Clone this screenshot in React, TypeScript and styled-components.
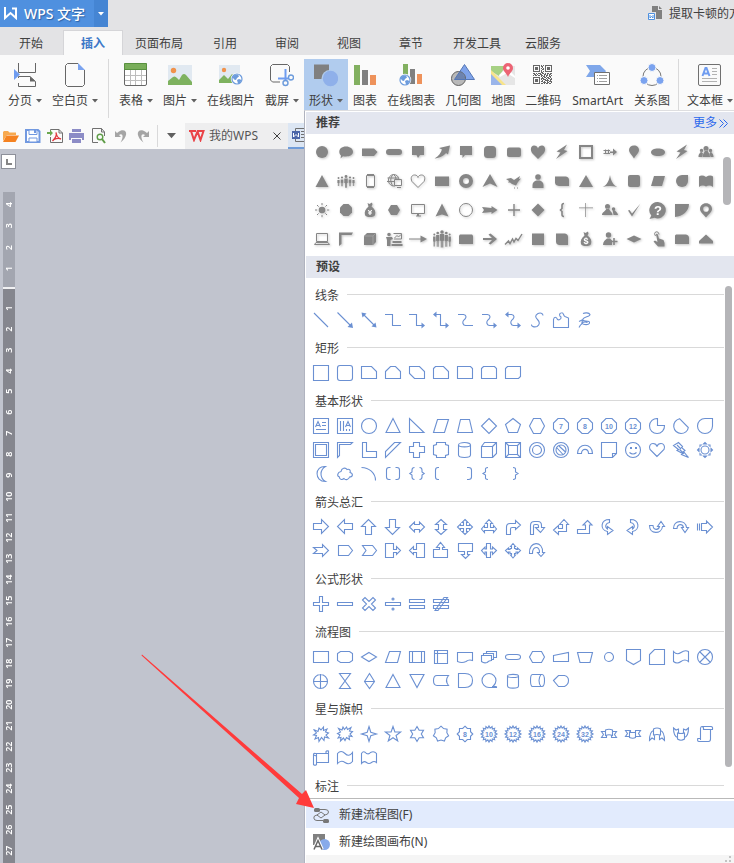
import React from 'react';
import styled, { createGlobalStyle, css } from 'styled-components';

const LINE = '#6b90d2';
const SOLID = '#868686';

const GlobalStyle = createGlobalStyle`
  * { box-sizing: border-box; }
  body {
    margin: 0;
    font-family: "Noto Sans", "Noto Sans CJK SC", sans-serif;
    font-size: 12px;
    line-height: 18px;
    color: #404040;
    background: #c1c4ce;
  }
  button { font: inherit; color: inherit; border: 0; padding: 0; margin: 0; background: none; cursor: default; }
  svg { display: block; flex: none; }
  h2, h3 { margin: 0; font-size: 12px; }
`;

const Page = styled.div`
  position: relative;
  display: flex;
  flex-direction: column;
  min-height: 100vh;
  overflow: hidden;
  white-space: nowrap;
`;

const TitleBar = styled.header`
  display: flex;
  justify-content: space-between;
  height: 27px;
  background: #e3e3e5;
`;

const Brand = styled.div`
  display: flex;
  background: #4f90df;
  color: #fff;
`;

const BrandButton = styled.button`
  display: flex;
  align-items: center;
  gap: 6px;
  width: 94px;
  padding-left: 4px;
  font-size: 14px;
  font-weight: 500;
  text-shadow: 1px 1px 1px #2d61a5;
`;

const BrandMore = styled.button`
  display: flex;
  align-items: center;
  justify-content: center;
  width: 14px;
  background: #4585d3;
`;

const OpenFile = styled.div`
  display: flex;
  align-items: center;
  gap: 6px;
  width: 86px;
  overflow: hidden;
`;

const Tabs = styled.nav`
  display: flex;
  height: 28px;
  padding-top: 3px;
  background: #e3e3e5;
`;

const Tab = styled.button<{ $active?: boolean }>`
  flex: none;
  min-width: 62px;
  padding: 2px 11px 0;
  ${(p) =>
    p.$active &&
    css`
      min-width: 60px;
      margin: 0 1px;
      background: #fafafa;
      border: 1px solid #d5d5d8;
      border-bottom: 0;
      color: #3c78c8;
      font-weight: 700;
    `}
`;

const Ribbon = styled.div`
  display: flex;
  align-items: flex-start;
  height: 68px;
  padding: 4px 0 0 3px;
  background: #fafafa;
  overflow: hidden;
`;

const RibbonButton = styled.button<{ $active?: boolean; $roomy?: boolean }>`
  display: flex;
  flex: none;
  flex-direction: column;
  align-items: center;
  gap: 5px;
  height: 51px;
  padding: 4px ${(p) => (p.$roomy ? 6 : 5)}px 0;
  background: ${(p) => (p.$active ? '#b1ccee' : 'transparent')};
`;

const RibbonLabel = styled.span`
  display: flex;
  align-items: center;
  gap: 4px;
`;

const Divider = styled.span<{ $tight?: boolean }>`
  flex: none;
  width: 1px;
  height: 59px;
  margin: 0 ${(p) => (p.$tight ? 3 : 5)}px;
  background: #d9d9da;
`;

const QuickBar = styled.div`
  display: flex;
  align-items: stretch;
  height: 26px;
  background: #fafafa;
  overflow: hidden;
`;

const QuickTools = styled.div`
  display: flex;
  align-items: center;
  gap: 6px;
  padding: 0 6px 0 3px;
`;

const QuickButton = styled.button`
  display: flex;
  align-items: center;
  justify-content: center;
  width: 16px;
  height: 16px;
`;

const QuickMore = styled.button`
  display: flex;
  align-items: center;
  justify-content: center;
  width: 28px;
  margin: 2px 0;
  border-left: 1px solid #d9d9da;
`;

const DocTab = styled.div<{ $active?: boolean }>`
  display: flex;
  flex: none;
  align-items: center;
  gap: 4px;
  width: 103px;
  padding: 0 7px 0 4px;
  color: #555;
  background: ${(p) => (p.$active ? '#dce6f3' : '#eeeeef')};
  border-bottom: ${(p) => (p.$active ? '2px solid #6f9cd9' : '0')};
`;

const CloseButton = styled.button`
  margin-left: auto;
`;

const Workspace = styled.main`
  display: flex;
  flex: 1;
  flex-direction: column;
  align-items: flex-start;
  background: #c1c4ce;
`;

const TabStop = styled.button`
  display: flex;
  align-items: center;
  justify-content: center;
  width: 15px;
  height: 15px;
  margin: 5px 0 23px 1px;
  background: #fff;
  border: 1px solid #8d909a;
`;

const Ruler = styled.div`
  display: flex;
  flex: 1;
  flex-direction: column;
  width: 12px;
  margin-left: 3px;
  font-family: "Noto Sans", sans-serif;
  font-size: 9px;
  font-weight: 600;
  line-height: 12px;
  color: #fff;
`;

const RulerPart = styled.div<{ $body?: boolean }>`
  display: flex;
  flex-direction: column;
  flex: ${(p) => (p.$body ? '1' : '0 0 97px')};
  padding: ${(p) => (p.$body ? '9px 0 2px' : '2px 0 8px')};
  background: ${(p) => (p.$body ? '#85868e' : '#a3a6b0')};
  border-bottom: ${(p) => (p.$body ? '0' : '2px solid #f1f1f3')};
`;

const Tick = styled.span`
  display: flex;
  flex: 1;
  align-items: center;
  justify-content: center;
  writing-mode: vertical-rl;
  transform: rotate(180deg);
`;

const Menu = styled.section`
  position: absolute;
  top: 110px;
  right: 0;
  bottom: 0;
  left: 304px;
  display: flex;
  flex-direction: column;
  padding: 1px 0 0 1px;
  background: #fff;
  border: 1px solid #b0b3bf;
  border-width: 1px 0 0 1px;
  border-top-color: #dedee0;
`;

const MenuHeader = styled.div`
  display: flex;
  flex: none;
  align-items: center;
  justify-content: space-between;
  height: 22px;
  padding: 0 6px 0 10px;
  background: #e3e6ef;
`;

const MoreLink = styled.a`
  display: flex;
  align-items: center;
  gap: 2px;
  color: #2b68ec;
  text-decoration: none;
`;

const ScrollArea = styled.div<{ $grow?: boolean }>`
  display: flex;
  flex: ${(p) => (p.$grow ? '1' : 'none')};
  min-height: 0;
  overflow: hidden;
`;

const Recommended = styled.div`
  display: grid;
  flex: 1;
  grid-template-columns: repeat(17, 24px);
  grid-auto-rows: 29px;
  padding: 3px 0 3px 4px;
`;

const PresetList = styled.div`
  flex: 1;
  padding-top: 4px;
  overflow: hidden;
`;

const Track = styled.div<{ $outer?: boolean }>`
  display: flex;
  flex: none;
  width: ${(p) => (p.$outer ? 11 : 10)}px;
  padding: ${(p) => (p.$outer ? '23px 3px 51px 0' : '8px 2px 31px 1px')};
`;

const Thumb = styled.div`
  flex: 1;
  border-radius: 4px;
  background: #b5b5b8;
`;

const Category = styled.section`
  margin-bottom: 3px;
`;

const CategoryTitle = styled.h3`
  display: flex;
  align-items: center;
  gap: 8px;
  height: 26px;
  padding: 2px 0 0 9px;
  font-weight: 400;
  &::after {
    content: "";
    flex: 1;
    align-self: flex-start;
    height: 1px;
    margin-top: 10px;
    background: #d9d9d9;
  }
`;

const ShapeGrid = styled.div`
  display: grid;
  grid-template-columns: repeat(17, 24px);
  grid-auto-rows: 24px;
  padding-left: 3px;
`;

const ShapeButton = styled.button<{ $solid?: boolean }>`
  display: flex;
  align-items: center;
  justify-content: center;
  svg {
    overflow: visible;
    filter: ${(p) => (p.$solid ? 'drop-shadow(1px 1px 1px rgba(0,0,0,.22))' : 'none')};
  }
`;

const MenuFooter = styled.div`
  flex: none;
  padding-top: 2px;
  border-top: 1px solid #b9b9b9;
`;

const MenuItem = styled.button<{ $hover?: boolean }>`
  display: flex;
  align-items: center;
  gap: 9px;
  width: 100%;
  height: 27px;
  padding-left: 7px;
  background: ${(p) => (p.$hover ? '#e2ebfd' : '#fff')};
`;

const Grip = styled.div`
  display: flex;
  justify-content: flex-end;
  height: 8px;
  padding-right: 3px;
  background: #f5f5f5;
`;

const Pointer = styled.svg`
  position: absolute;
  top: 654px;
  left: 141px;
  pointer-events: none;
`;

/* ---------- shape data ---------- */

interface Shape {
  name: string;
  d?: string;
  fill?: string;
  text?: string;
  size?: number;
  weight?: number;
  cut?: string;
}

const s = (name: string, d?: string, fill?: string, text?: string, size?: number): Shape => ({
  name, d, fill, text, size,
});

const star = (n: number, outer: number, inner: number, cx = 8, cy = 8) => {
  const pts: string[] = [];
  for (let i = 0; i < n * 2; i += 1) {
    const r = i % 2 ? inner : outer;
    const a = (Math.PI * i) / n - Math.PI / 2;
    pts.push(`${(cx + r * Math.cos(a)).toFixed(2)} ${(cy + r * Math.sin(a)).toFixed(2)}`);
  }
  return `M${pts.join('L')}z`;
};

const circle = (cx: number, cy: number, r: number) =>
  `M${cx - r} ${cy}a${r} ${r} 0 1 0 ${2 * r} 0a${r} ${r} 0 1 0 ${-2 * r} 0z`;

const OCT = 'M5 .5H11L15.5 5V11L11 15.5H5L.5 11V5z';
const GEAR = star(16, 8, 6);
const HEAD_R = 'M16 13.5L12.5 10.5V16.5z';
const HEAD_L = 'M0 2.5L3.5 -.5V5.5z';
const CURVE = 'H6.5C9.5 3 9.5 5.5 8 7C5.5 9 5 11 7 13L8.5 13.5H';

const presets: { title: string; shapes: Shape[] }[] = [
  {
    title: '线条',
    shapes: [
      s('直线', 'M1 1L15 15'),
      s('箭头', 'M.5 .5L14 14', 'M16 16L10.5 15L15 10.5z'),
      s('双箭头', 'M2 2L14 14', 'M15.5 15.5L10.5 14.5L14.5 10.5zM.5 .5L5.5 1.5L1.5 5.5z'),
      s('肘形连接符', 'M0 2.5H7.5V13.5H16'),
      s('肘形箭头连接符', 'M0 2.5H7.5V13.5H13', HEAD_R),
      s('肘形双箭头连接符', 'M3 2.5H7.5V13.5H13', HEAD_R + HEAD_L),
      s('曲线连接符', `M1 2.5${CURVE}16`),
      s('曲线箭头连接符', `M1 2.5${CURVE}13`, HEAD_R),
      s('曲线双箭头连接符', `M3 2.5${CURVE}13`, HEAD_R + HEAD_L),
      s('曲线', 'M14 3.5C14 1 11 .5 9 1.5C5.5 3.5 6.5 5.5 8.5 7.5C11 10 11 12.5 8 14.5C5.5 15.5 2 14.5 2.5 12.5'),
      s('任意多边形', 'M.5 15.5V7.5C1 4.5 3.5 4.5 4.5 7.5C6 8.5 8.5 7 8 5C6 4 6 1 8.5 .8C11 .5 10 3.5 12 4.5L15.5 6V15.5z'),
      s('自由曲线', 'M6 1.5C8 .5 12 .5 13 2.5C13 5 7 4.5 6 7C5 9.500 9 8.500 12 9.500C14 12 10 13.500 6 12C3.500 10.500 8 9 10.500 10.500M6 7.500C4 10 6 12.500 3.500 13L2 15.500M2 9.500L6 7.500'),
    ],
  },
  {
    title: '矩形',
    shapes: [
      s('矩形', 'M.5 .5H15.5V15.5H.5z'),
      s('圆角矩形', 'M3 .5H13Q15.5 .5 15.5 3V13Q15.5 15.5 13 15.5H3Q.5 15.5 .5 13V3Q.5 .5 3 .5z'),
      s('剪去单角的矩形', 'M.5 1.5H10.5L15.5 6.5V13.5H.5z'),
      s('剪去同侧角的矩形', 'M.5 6.5L5.5 1.5H10.5L15.5 6.5V13.5H.5z'),
      s('剪去对角的矩形', 'M.5 1.5H10.5L15.5 6.5V13.5H5.5L.5 8.5z'),
      s('剪去单角圆角的矩形', 'M.5 3.5L2.5 1.5H10.5L15.5 6.5V13.5H.5z'),
      s('单圆角矩形', 'M.5 1.5H13.5L15.5 3.5V13.5H.5z'),
      s('同侧圆角矩形', 'M.5 3.5L2.5 1.5H13.5L15.5 3.5V13.5H.5z'),
      s('对角圆角矩形', 'M.5 3.5L2.5 1.5H15.5V11.5L13.5 13.5H.5z'),
    ],
  },
  {
    title: '基本形状',
    shapes: [
      s('文本框', 'M.5 .5H15.5V15.5H.5zM9 4.5H13M9 7.5H13M3 11.5H13M2.5 9L5 3.5L7.5 9M3.5 7.5H6.5'),
      s('竖排文本框', 'M.5 .5H15.5V15.5H.5zM3.5 3V13M6.5 3V13M8.5 9L11 3.5L13.5 9M9.5 7.5H12.5M9.5 11V13M12.5 11V13'),
      s('椭圆', circle(8, 8, 7.5)),
      s('等腰三角形', 'M8 .5L15 14.5H1z'),
      s('直角三角形', 'M.5 .5V14.5H15z'),
      s('平行四边形', 'M4.5 1.5H15.5L11.5 14.5H.5z'),
      s('梯形', 'M3.5 1.5H12.5L15.5 14.5H.5z'),
      s('菱形', 'M8 .5L15.5 8L8 15.5L.5 8z'),
      s('五边形', 'M8 .5L15.5 6.5L12.5 14.5H3.5L.5 6.5z'),
      s('六边形', 'M4.5 .5H11.5L15.5 8L11.5 15.5H4.5L.5 8z'),
      s('七边形', OCT, undefined, '7'),
      s('八边形', OCT, undefined, '8'),
      s('十边形', OCT, undefined, '10'),
      s('十二边形', OCT, undefined, '12'),
      s('饼形', 'M8.5 .5A7.5 7.5 0 1 0 15.5 7.5H8.5z'),
      s('弦形', 'M6.5 .7L15.3 9.5C15 13 11.5 15.5 8 15.5A7.5 7.5 0 0 1 6.5 .7z'),
      s('泪滴形', 'M15.5 .5V8A7.5 7.5 0 1 1 8 .5z'),
      s('图文框', 'M.5 .5H15.5V15.5H.5zM2.5 2.5H13.5V13.5H2.5z'),
      s('半闭框', 'M.5 .5H15.5L13.5 2.5H2.5V13.5L.5 15.5z'),
      s('L 形', 'M1.5 .5H5.5V9.5H15.5V15.5H1.5z'),
      s('斜纹', 'M9.5 .5H15.5L.5 15.5V9.5z'),
      s('十字形', 'M4.5 .5H10.5V4.5H15.5V10.5H10.5V15.5H4.5V10.5H.5V4.5H4.5z'),
      s('缺角矩形', 'M3.5 .5H12.5V2.5L15.5 3.5V12.5L12.5 13.5V15.5H3.5V13.5L.5 12.5V3.5L3.5 2.5z'),
      s('圆柱形', 'M1.5 3V13C1.5 16.3 13.5 16.3 13.5 13V3C13.5 -.3 1.5 -.3 1.5 3C1.5 5.5 13.5 5.5 13.5 3'),
      s('立方体', 'M.5 4.5H11.5V15.5H.5zM.5 4.5L3.5 .5H15.5V11.5L11.5 15.5M11.5 4.5L15.5 .5'),
      s('棱台', 'M.5 .5H15.5V15.5H.5zM3.5 3.5H12.5V12.5H3.5zM.5 .5L3.5 3.5M15.5 .5L12.5 3.5M.5 15.5L3.5 12.5M15.5 15.5L12.5 12.5'),
      s('同心圆', circle(8, 8, 7.5) + circle(8, 8, 4.5)),
      s('禁止符', circle(8, 8, 7.5) + circle(8, 8, 5) + 'M4 6L10 12.5M6 4L12.5 10'),
      s('空心弧', 'M.5 11.5C.5 .5 15.5 .5 15.5 11.5H11.5C11.5 6 4.5 6 4.5 11.5z'),
      s('折角形', 'M.5 .5H15.5V11.5L11.5 15.5H.5zM15.5 11.5H11.5V15.5'),
      s('笑脸', circle(8, 8, 7.5) + 'M4.5 10.5Q8 13.5 11.5 10.5', 'M5 5h2v2h-2zM10 5h2v2h-2z'),
      s('心形', 'M8 14.5L1 7.5C-.5 4 1.5 1.5 4 1.5C6 1.5 7.5 2.5 8 4.5C8.5 2.5 10 1.5 12 1.5C14.5 1.5 16.5 4 15 7.5z'),
      s('闪电形', 'M5.5 .5L.5 3.5L5.5 7.5L4 8.5L9.5 11.5L8.5 12.5L15.5 15.5L10.5 9.5L12 8.5L8.5 5.5L9.5 4.5zM4 3L8 7M6.5 7.5L11 11.5'),
      s('太阳形', circle(8, 8, 4) + 'M6.5 2L8 .5L9.5 2zM6.5 14L8 15.5L9.5 14zM2 6.5L.5 8L2 9.5zM14 6.5L15.5 8L14 9.5zM3 5V3H5M11 3H13V5M13 11V13H11M5 13H3V11'),
      s('新月形', 'M12.5 .5C1.5 -.5 1 15.5 12.5 15.5C6.5 12 6.5 4 12.5 .5z'),
      s('云形', 'M4 5.5C4.5 2 8.5 1 10 3.5C12.5 2.5 14 4.5 13 6.5C16.5 7.5 16 11 12.5 11C12 13.5 8.5 14.5 7 12.5C5 14.5 2 13 2.5 11C-.5 10 .5 6 4 5.5z'),
      s('弧形', 'M.5 1.5C8 1.5 14.5 7 14.5 14.5'),
      s('双括号', 'M5.5 1.5H4Q1.5 1.5 1.5 4V11Q1.5 13.5 4 13.5H5.5M10.5 1.5H12Q14.5 1.5 14.5 4V11Q14.5 13.5 12 13.5H10.5'),
      s('双大括号', 'M5.5 1.5Q3 1.5 3 4V6L.8 7.5L3 9V11Q3 13.5 5.5 13.5M10.5 1.5Q13 1.5 13 4V6L15.2 7.5L13 9V11Q13 13.5 10.5 13.5'),
      s('左中括号', 'M6 1.5H5Q2.5 1.5 2.5 4V11Q2.5 13.5 5 13.5H6'),
      s('右中括号', 'M10 1.5H11.5Q14.5 1.5 14.5 4V11Q14.5 13.5 11.5 13.5H10'),
      s('左大括号', 'M7 1.5Q4 1.5 4.5 4V6L2 7.5L4.5 9V11Q4 13.5 7 13.5'),
      s('右大括号', 'M8 1.5Q11 1.5 10.500 4V6L13 7.500L10.500 9V11Q11 13.500 8 13.500'),
    ],
  },
  {
    title: '箭头总汇',
    shapes: [
      s('右箭头', 'M.5 4.5H8.5V.5L15.5 7.5L8.5 14.5V10.5H.5z'),
      s('左箭头', 'M15.5 4.5H7.5V.5L.5 7.5L7.5 14.5V10.5H15.5z'),
      s('上箭头', 'M4.5 15.5V7.5H.5L7.5 .5L14.5 7.5H10.5V15.5z'),
      s('下箭头', 'M4.5 .5H10.5V8.5H14.5L7.5 15.5L.5 8.5H4.5z'),
      s('左右箭头', 'M.5 8L5.5 3V5.5H10.5V3L15.5 8L10.5 13V10.5H5.5V13z'),
      s('上下箭头', 'M8 .5L13.5 5.5H10.5V10.5H13.5L8 15.5L2.5 10.5H5.5V5.5H2.5z'),
      s('十字箭头', 'M8 .5L11 3.5H9.5V6.5H12.5V5L15.5 8L12.5 11V9.5H9.5V12.5H11L8 15.5L5 12.5H6.5V9.5H3.5V11L.5 8L3.5 5V6.5H6.5V3.5H5z'),
      s('丁字箭头', 'M8 .5L11.5 4.5H9.5V8.5H12.5V6.5L15.5 10L12.5 13.5V11.5H3.5V13.5L.5 10L3.5 6.5V8.5H6.5V4.5H4.5z'),
      s('圆角右箭头', 'M1.5 15.5V8Q1.5 4.5 5 4.5H10.5V1.5L15.5 6L10.5 10.5V8.5H7Q5.5 8.5 5.5 10V15.5z'),
      s('手杖形箭头', 'M1.5 15.5V6.5Q1.5 2.5 5.5 2.5H9Q12.5 2.5 12.5 6.5V8.5H15.5L11.5 13.5L6.5 8.5H9.5V7Q9.5 5.5 8 5.5H6Q4.5 5.5 4.5 7V15.5z'),
      s('直角双向箭头', 'M11 .5L15.5 5.5H13.5V12.5H5.5V15.5L.5 11L5.5 6.5V9.5H9.5V5.5H6.5z'),
      s('直角上箭头', 'M10.5 1.5L15 6H12.5V14.5H.5V10.5H8.5V6H6z'),
      s('左弧形箭头', 'M8.5 .5C-.5 .5 -1.5 11 6.5 12.5V15.5L12 11.500L6.500 7.500V10C3.500 8 4.500 4 8.500 3.500z'),
      s('右弧形箭头', 'M5.500 .5C14.500 .5 15.500 11 7.500 12.500V15.500L2 11.500L7.500 7.500V10C10.500 8 9.500 4 5.500 3.500z'),
      s('下弧形箭头', 'M.5 6.5C.5 15.5 12.5 15.5 13.5 7.5H15.5L12 2.5L8.5 7.5H10.5C9.5 11.5 4.5 11.5 4 6.5z'),
      s('上弧形箭头', 'M.5 9.5C.5 .5 12.5 .5 13.5 8.5H15.5L12 13.5L8.5 8.5H10.5C9.5 4.5 4.5 4.5 4 9.5z'),
      s('虚尾箭头', 'M.5 4.5V11.5M2.5 4.5V11.5M4.5 4.5H9.5V2L15.5 8L9.5 14V11.5H4.5z'),
      s('燕尾形箭头', 'M.5 4.5H9.5V1.5L15.5 7.5L9.5 13.5V10.5H.5L4 7.5z'),
      s('五边形箭头', 'M1.5 2.5H11.5L15.5 7.5L11.5 12.5H1.5z'),
      s('燕尾形', 'M1.5 2.5H11.5L15.5 7.5L11.5 12.5H1.5L5 7.5z'),
      s('右箭头标注', 'M.5 .5H8.5V6.5H11.5V3.5L15.5 7.5L11.5 11.5V9.5H8.5V14.5H.5z'),
      s('左箭头标注', 'M15.5 .5H7.5V6.5H4.5V3.5L.5 7.5L4.5 11.5V9.5H7.5V14.5H15.5z'),
      s('上箭头标注', 'M.5 14.5V6.5H6.5V4.5H3.5L7.5 -.5L11.5 4.5H9.5V6.5H14.5V14.5z'),
      s('下箭头标注', 'M1.5 .5V8.5H7.5V11.5H4.5L8.5 15.5L12.5 11.5H10.5V8.5H15.5V.5z'),
      s('左右箭头标注', 'M5.5 .5H9.5V6H11.5V4L15.5 7.5L11.5 11.5V9H9.5V14.5H5.5V9H4V11.5L.5 7.5L4 4V6H5.5z'),
      s('十字箭头标注', 'M8 .5L10.5 3.5H9.5V5.5H11V6.5H12.5V5L15.5 7.5L12.5 10.5V9H11V10.5H9.5V12H10.5L8 15L5.5 12H6.5V10.5H5V9H3.5V10.5L.5 7.5L3.5 5V6.5H5V5.5H6.5V3.5H5.5z'),
      s('环形箭头', 'M.5 10.5C-.5 -2.5 14.5 -2.5 13.5 9.5H15.5L12 13.5L8.5 9.5H10.5C11 3 3.5 2.5 3.5 10.5z'),
    ],
  },
  {
    title: '公式形状',
    shapes: [
      s('加号', 'M6.5 .5H9.5V6.5H15.5V9.5H9.5V15.5H6.5V9.5H.5V6.5H6.5z'),
      s('减号', 'M.5 6.5H15.5V9.5H.5z'),
      s('乘号', 'M1.5 4L4 1.5L8 5.5L12 1.5L14.5 4L10.5 8L14.5 12L12 14.5L8 10.5L4 14.5L1.5 12L5.5 8z'),
      s('除号', 'M.5 6.5H15.5V9.5H.5z' + circle(8, 3, 1) + circle(8, 13, 1)),
      s('等号', 'M.5 3.5H15.5V6.5H.5zM.5 9.5H15.5V12.5H.5z'),
      s('不等号', 'M.5 3.5H15.5V6.5H.5zM.5 9.5H15.5V12.5H.5zM2 14.5L11 1.5H14.5L5 14.5z'),
    ],
  },
  {
    title: '流程图',
    shapes: [
      s('过程', 'M.5 2.5H15.5V13.5H.5z'),
      s('可选过程', 'M3.5 2.5H12.5L15.5 4.5V11.5L12.5 13.5H3.5L.5 11.5V4.5z'),
      s('决策', 'M8 3.5L15.5 8L8 12.5L.5 8z'),
      s('数据', 'M4.5 2.5H15.5L12.5 13.5H.5z'),
      s('预定义过程', 'M.5 2.5H15.5V13.5H.5zM3.5 2.5V13.5M12.5 2.5V13.5'),
      s('内部贮存', 'M1.5 1.5H14.5V14.5H1.5zM1.5 4.5H14.5M4.5 1.5V14.5'),
      s('文档', 'M.5 3.5H15.5V11.5Q12 10 9 12.5Q5 14.5 .5 12.5z'),
      s('多文档', 'M.5 6.5H10.5V11.5Q8 11.5 6 13.5Q3 14.5 .5 12.5zM2.5 6V4.5H12.5V10.5H11M5.5 4V2.5H15.5V8.5H13'),
      s('终止', 'M4 5.5H12Q15.5 5.5 15.5 8T12 10.5H4Q.5 10.5 .5 8T4 5.5z'),
      s('准备', 'M3.5 2.5H12.5L15.5 8L12.5 13.5H3.5L.5 8z'),
      s('手动输入', 'M.5 6.5L15.5 3.5V12.5H.5z'),
      s('手动操作', 'M.5 3.5H15.5L13 13.5H3z'),
      s('联系', circle(8, 8, 4.5)),
      s('离页连接符', 'M1.5 .5H15.5V11.5L8.5 15.5L1.5 11.5z'),
      s('卡片', 'M5.5 .5H15.5V15.5H.5V5.5z'),
      s('资料带', 'M.5 2.5Q4 6.5 8 3.5T15.5 2.5V12.5Q12 9.5 8 12.5T.5 12.5z'),
      s('汇总连接', circle(8, 8, 7.5) + 'M3 3L13 13M13 3L3 13'),
      s('或者', circle(7.5, 8.5, 7) + 'M.5 8.5H14.5M7.5 1V15'),
      s('对照', 'M2.5 .5H13.5L8 8L13.5 15.5H2.5L8 8z'),
      s('排序', 'M8.5 .5L13.5 8.5L8.5 15.5L3.5 8.5zM3.5 8.5H13.5'),
      s('摘录', 'M8 1.5L15 14.5H1z'),
      s('合并', 'M1 1.5H15L8 14.5z'),
      s('存储数据', 'M4 2.5H15.5Q11.5 7.5 15.5 12.5H4Q.5 12.5 .5 7.5T4 2.5z'),
      s('延期', 'M1.5 .5H8Q15.5 .5 15.5 7.5T8 14.5H1.5z'),
      s('顺序访问存储器', 'M15.5 13.5H11M12 13.5C14 11.5 15 10 15 7.5A7 7 0 1 0 8 14.5H15.5V13.5'),
      s('磁盘', 'M2.5 3V13C2.5 15.8 13.5 15.8 13.5 13V3C13.5 .8 2.5 .8 2.5 3C2.5 5 13.5 5 13.5 3'),
      s('直接访问存储器', 'M3.500 1.500H13Q15.500 1.500 15.500 7.500T13 13.500H3.500Q1.500 13.500 1.500 7.500T3.500 1.500zM12 1.500Q10 4 10 7.500T12 13.500'),
      s('显示', 'M.5 7.5L5.5 2.5H11.5Q15.5 3.5 15.5 7.5T11.5 13.5H5.5z'),
    ],
  },
  {
    title: '星与旗帜',
    shapes: [
      s('爆炸形 1', 'M8 4L10.5 1V4.5L14 3L12.5 6L15.5 7L13 9L15.5 12L11.5 11L11 14.5L8.5 11.5L6 15.5L5.5 11.5L2 13L3.5 9.5L.5 9L3.5 7L.5 3.5L5 5.5L6 2z'),
      s('爆炸形 2', 'M7.5 3.5L9.5 1L10.5 3.5L14 1.5L12.5 5L15.5 5.5L13 8L15 10.5L12 10L12.5 13.5L9.5 11.5L8 14.5L6.5 12L3.5 15L4 11.5L1 12L3 9L.5 7.5L3.5 6L1.5 2.5L5 4L6 1z'),
      s('十字星', star(4, 7.5, 2.5)),
      s('五角星', star(5, 8, 3.2, 8, 8.5)),
      s('六角星', star(6, 7.5, 4.3)),
      s('七角星', star(7, 7.8, 6)),
      s('八角星', star(8, 7.8, 6), undefined, '8'),
      s('十角星', GEAR, undefined, '10'),
      s('十二角星', GEAR, undefined, '12'),
      s('十六角星', GEAR, undefined, '16'),
      s('二十四角星', GEAR, undefined, '24'),
      s('三十二角星', GEAR, undefined, '32'),
      s('上凸带形', 'M4.5 4Q8 2.5 11.5 4V9.5Q8 8 4.5 9.5zM4.5 5.5H.5L2.5 8.5L.5 11.5H5.5V9.5M11.5 5.5H15.5L13.5 8.5L15.5 11.5H10.5V9.5'),
      s('前凸带形', 'M5.5 6.5H10.5V11.5Q8 13 4.5 11.5V6zM4.5 10.5H.5L2.5 7.5L.5 4.5H5.5V6.5M11 10.5H15.5L13.5 7.5L15.5 4.5H10.5V6.5'),
      s('上凸弯带形', 'M4.5 3Q8 1 11.5 3V9Q8 8 4.5 9zM4.5 4.5Q.5 6 .5 14.5L3 12L5.5 13.5V9M11.5 4.5Q15.5 6 15.5 14.5L13 12L10.5 13.5V9'),
      s('前凸弯带形', 'M4.5 7Q8 8 11.5 7V13Q8 15.5 4.5 13zM4.5 11.5Q.5 10 .5 2L3 4L5.5 3V7M11.5 11.5Q15.5 10 15.5 2L13 4L10.5 3V7'),
      s('竖卷形', 'M4.5 .5H14Q16 .5 15.5 3.5H13.5V13Q13.5 15.5 11.5 15.5H2Q0 15.5 .8 12.5H3.5V2.5Q3.5 .5 5 .5Q7 1 6.5 3.5H13.5M3.5 12.5V14'),
      s('横卷形', 'M.5 4.5Q.5 3 2.5 3.5H13V1.5Q13.5 .5 15.5 1V12.5H3.5V14.5Q2 16 .5 14.5zM3.5 4V12.5M.5 5L3.5 6M13 3.5H15.5'),
      s('波形', 'M.5 3.5Q4 -.5 8 3.5T15.5 2.5V11.5Q12 15.5 8 12.5T.5 13.5z'),
      s('双波形', 'M.5 3.5Q2.5 0 5.5 3.5Q8 4.5 9.5 2.5Q13 .5 15.5 3.5V12.5Q13 10.5 10.5 12.5Q8 14.5 5.5 12.5Q3 10.5 .5 13.5z'),
    ],
  },
  { title: '标注', shapes: [] },
];

const person = (x: number, y: number, h: number, w = 3) =>
  `${circle(x, y, w * 0.42)}M${x - w / 2} ${y + 2}h${w}v${h * 0.42}h-${w * 0.2}v${h * 0.42}h-${w * 0.25}v-${h * 0.4}h-${w * 0.1}v${h * 0.4}h-${w * 0.25}v-${h * 0.42}h-${w * 0.2}z`;

const BOLT = 'M13 .5L2.500 7.500L6.500 8.500L2 15L13.500 7L10 6z';
const BAG = 'M5.5 1L7.5 2L10 .5L10.5 2.5L9.5 4.5C13 7 14 10 13 13Q12 15 8 15T3 13C2 10 3.5 7 6.5 4.5z';
const PEOPLE = circle(8, 4.5, 2.5) + 'M4.5 13C4.5 10 6 9.5 7 6.5H9.5C11 10 12 10 12 13z' + circle(3.5, 6.5, 1.7) + 'M.5 13C.5 9.5 2 9.5 3 7.5L5 9.5L4 13z' + circle(12.5, 6.5, 1.7) + 'M12.5 13H15.5C15.5 9.5 14 9.5 13 7.5L11.5 9.5z';

const recommended: Shape[] = [
  s('圆形', undefined, circle(8, 8, 6)),
  s('椭圆标注', undefined, 'M8 2.5C12 2.5 15 4.8 15 7.8S12 12.500 8 12.500C6.8 12.500 6 12.500 5 12.3L2.500 14.500L3 11.500C-.5 8 1.500 2.500 8 2.500z'),
  s('五边形', undefined, 'M0 4.5H12L15.5 8L12 12H0z'),
  s('胶囊形', undefined, 'M3 5H13A3 3 0 0 1 13 11H3A3 3 0 0 1 3 5z'),
  s('矩形标注', undefined, 'M2 2H14V11H10L8 14L6.5 11H2z'),
  s('飞箭', undefined, 'M.5 14.5C6 14 10 11.5 12 9L14 10.5L16 1.500L5 4L8 5.500C7 8.500 5 12 .5 14.500z'),
  s('左下标注', undefined, 'M2 2H14V11H7L4.5 14V11H2z'),
  s('圆角方形', undefined, 'M5.5 2H10.500Q14 2 14 5.500V10.500Q14 14 10.500 14H5.500Q2 14 2 10.500V5.500Q2 2 5.500 2z'),
  s('圆角矩形', undefined, 'M3 3.5H13Q15 3.5 15 5.5V11Q15 13 13 13H3Q1 13 1 11V5.5Q1 3.5 3 3.5z'),
  s('心形', undefined, 'M8 15L2 9C-.5 5 1.5 1.5 4 1.5C6 1.5 7.5 2.5 8 4.5C8.5 2.5 10 1.5 12 1.5C14.5 1.5 16.5 5 14 9z'),
  s('闪电', undefined, BOLT),
  { name: '图文框', d: 'M2 2H14V14H2z', weight: 2 },
  s('虚线箭头', 'M1.5 6.5H8M1.5 9.5H8M3.5 5.5V10M6.5 5.5V10', 'M8 7.5H11V4.5L15 8L11 11.5V9H8z'),
  s('水滴针', undefined, 'M8 1.5C11 1.5 13 3.5 13 6C13 9 10 11 8 14.5C6 11 3 9 3 6C3 3.5 5 1.5 8 1.5z'),
  s('扁椭圆', undefined, 'M8 4.5C12 4.5 15 6 15 8.2S12 12 8 12S1 10.5 1 8.2S4 4.5 8 4.5z'),
  s('闪电', undefined, BOLT),
  s('人群', undefined, PEOPLE),

  s('三角形', undefined, 'M8 2L14.5 14H1.5z'),
  s('团队', undefined, person(8, 3.500, 11, 3.4) + person(4, 4.500, 8, 2.6) + person(12, 4.500, 8, 2.6) + person(.5, 5, 7, 2.2) + person(15.500, 5, 7, 2.2)),
  s('手机', 'M5.5 1.5H11.5L12.5 3V13.5L11.5 14.5H5.5L4.5 13.5V3z', 'M5 1H12V3H5zM5 13H12V15H5z'),
  s('网络', 'M7.5 1.5A5.8 5.8 0 1 0 9 13M7.5 1.5A5.8 5.8 0 0 1 13 6.5M7 1.5C4 5 4 9 7 13M7.5 1.5Q10 3 10 6M1.5 5H12.5M1 8.5H8M8.5 6.5H15.5V12.5H8.5zM11 14.5H15'),
  { name: '空心心形', d: 'M8 14.500L2 8.500C0 4.500 2 2 4.500 2C6.500 2 7.500 3 8 4.500C8.500 3 9.500 2 11.500 2C14 2 16 4.500 14 8.500z' },
  s('矩形', undefined, 'M1 3.5H15V13H1z'),
  s('圆环', undefined, circle(8, 8, 7) + 'M5 8a3 3 0 1 1 6 0a3 3 0 1 1 -6 0z'),
  s('导航箭头', undefined, 'M8 1L15.5 14L8 10.5L.5 14z'),
  s('飞鸟', undefined, 'M0 6L5 5L8 7L11 5L14 3L13 6L15 5.5L12 9L10 12.5L6 11L4 9.5L2 9.5L3 8zM8 14.500h1v1h-1zM11 14.500h1v1h-1z'),
  s('人物', undefined, circle(8, 4, 2.8) + 'M2.5 15V12C2.5 9.5 4.5 8 6.5 7.5H9.5C11.5 8 13.5 9.5 13.5 12V15z'),
  s('对角矩形', undefined, 'M1 3.5H12Q15 4 15 7V13H5Q1 12.5 1 9.5z'),
  s('三角形', undefined, 'M8 2L15 14H1z'),
  s('弧边三角形', undefined, 'M8 2C9 8 11 12 15.5 14Q8 12 .5 14C5 12 7 8 8 2z'),
  s('圆角方形', undefined, 'M4 2H12Q14 2 14 4V12Q14 14 12 14H4Q2 14 2 12V4Q2 2 4 2z'),
  s('平行四边形', undefined, 'M4 3H15L12 13H1z'),
  s('泪滴形', undefined, 'M14 2V8A6 6 0 1 1 8 2z'),
  s('书本', undefined, 'M1 3.5Q4 1.5 8 4Q12 1.5 15 3.5V14Q11.5 11.5 8 13.5Q4.5 11.5 1 14z'),

  s('太阳', 'M8 1V3.2M8 13V15.2M1 8H3.2M13 8H15.2M3 3L4.6 4.6M13 3L11.4 4.6M3 13L4.6 11.4M13 13L11.4 11.4', circle(8, 8, 3.3)),
  s('八边形', undefined, 'M5.5 2H10.5L14 5.5V10.5L10.5 14H5.5L2 10.5V5.5z'),
  s('钱袋', undefined, BAG, '¥', 8),
  s('六边形', undefined, 'M5 3H11L14 8L11 13H5L2 8z'),
  s('显示器', 'M1.5 2.5H14.5V11.5H1.5zM6 14H11', 'M7 12H9V14H7z'),
  s('箭形三角', undefined, 'M8 1.5L14.5 14.5L8 12.5L1.5 14.5z'),
  s('空心圆', circle(8, 8, 6.5)),
  s('粗箭头', undefined, 'M0 5L9.5 6V4L15.5 8L9.5 12V10L0 11L2 8z'),
  { name: '加号', d: 'M8 2V14M2 8H14', weight: 1.4 },
  s('菱形', undefined, 'M8 1.5L14.5 8L8 14.5L1.5 8z'),
  { name: '左大括号', d: 'M10 1.500Q8 1.500 8 3.500V6.500L6.500 8L8 9.500V12.500Q8 14.500 10 14.500', weight: 1.6 },
  s('细十字', undefined, 'M1 5.5H15V6.2H1zM7 1H7.7V15H7z'),
  s('双人', undefined, circle(5.5, 4.5, 2.5) + 'M0 13C0 10 3 10 4.5 6.5H7C8 10 10.5 10 10.5 13z' + circle(11.5, 7, 1.8) + 'M11.5 13H16C16 11 14 10 12.5 8H10.500z'),
  s('对勾', undefined, 'M2 8.5L3.5 8L6 11.5L14.5 1.500L6 14.500z'),
  s('疑问', undefined, 'M8 0A8.2 8.2 0 1 1 4.5 15.8L-.5 17L1.3 13.5A8.2 8.2 0 0 1 8 0z', '?', 13),
  s('四分之一圆', undefined, 'M1 2H15C15 9 8.5 14.5 1 15z'),
  s('定位', undefined, 'M8 1.2C11.5 1.2 14 3.7 14 7C14 10 11 12 8 15.5C5 12 2 10 2 7C2 3.7 4.5 1.2 8 1.2zM5.2 7a2.8 2.8 0 1 0 5.6 0a2.8 2.8 0 1 0 -5.6 0z'),

  s('笔记本电脑', 'M2.5 2.5H13.5V10.5H2.5zM.5 13.5H15.5L14 11.5H2z'),
  s('半闭框', undefined, 'M1 1.5H15L13.5 4H3.5V13L1 15z'),
  { name: '立方体', fill: 'M2 5L5 2H14V11L11 14H2z', cut: 'M2 5H11V14M11 5L14 2' },
  s('演示', 'M7.5 2.5H15.5V8H8M8.5 7L11 4.5L12.5 6L15 3.5', circle(3, 3.5, 1.8) + 'M0 6H6L7 8L4.5 9V15H1V9zM6.5 10h9v2h-9zM5.5 13h11v2h-11z'),
  s('细箭头', 'M-1 8H13', 'M17 8L10.5 4.5V11.5z'),
  s('人群', undefined, person(8, 1, 16, 4.2) + person(3.7, 2, 14, 3.2) + person(12.3, 2, 14, 3.2) + person(.3, 3.500, 12, 2.4) + person(15.7, 3.500, 12, 2.4)),
  s('矩形', undefined, 'M2 3.5H14L15 4.5V13H1V4.5z'),
  s('右箭头', undefined, 'M1 7H10L6.5 3.5L8.5 2.5L15 8L8.5 13.5L6.5 12.5L10 9H1z'),
  { name: '折线', d: 'M-1 13.500L2.500 10L4 12.500L6.500 8L8 11L10 7.500L12 9.500L16 3', weight: 1.4 },
  s('正方形', undefined, 'M2 2.5H14V14H2z'),
  s('折角方形', undefined, 'M2 2.5H11Q14 3 14 6V14H5Q2 13.5 2 10.5z'),
  s('美元钱袋', undefined, BAG, '$', 9),
  { name: '添加用户', d: 'M12 7V14M8.500 10.500H15.500', fill: circle(6.5, 4, 2.7) + 'M1 14C1 10.500 3 9 5 7.500H8L10 9.500V14z', weight: 1.600 },
  s('扁菱形', undefined, 'M8 4.5L15.5 8L8 11.5L.5 8z'),
  s('手势', 'M5.5 5Q3.5 2.5 5.5 1Q8.5 0 9 3.5', 'M6 3Q7.5 2 8 4L9 7.5L13.5 9L14.5 12V15.5H8L3.5 10.5L5 9.5L7.5 11z'),
  s('单圆角矩形', undefined, 'M2 3.5H12Q15 4 15 7V13H1V4.500z'),
  s('扁三角', undefined, 'M8 3.5L15 10V12.5H1V10z'),
];

const RINGS = ['圆环', '定位'];

function ShapeIcon({ shape, solid }: { shape: Shape; solid?: boolean }) {
  const color = solid ? SOLID : LINE;
  return (
    <svg width="16" height="16" viewBox="0 0 16 16" aria-hidden="true">
      {shape.fill && (
        <path d={shape.fill} fill={color} fillRule={RINGS.includes(shape.name) ? 'evenodd' : 'nonzero'} />
      )}
      {shape.d && <path d={shape.d} fill="none" stroke={color} strokeWidth={shape.weight || (solid ? 1 : 1.1)} />}
      {shape.cut && <path d={shape.cut} fill="none" stroke="#a6a6a6" strokeWidth=".8" />}
      {shape.text && (
        <text
          x="8"
          y={solid ? 12.5 : 10.5}
          textAnchor="middle"
          fontFamily="Liberation Sans, sans-serif"
          fontWeight="700"
          fontSize={shape.size || 7}
          fill={solid ? '#fff' : LINE}
        >
          {shape.text}
        </text>
      )}
    </svg>
  );
}

/* ---------- toolbar drawings ---------- */

const Caret = ({ size = 6, color = '#606060' }: { size?: number; color?: string }) => (
  <svg width={size} height={Math.ceil(size / 2) + 1} viewBox="0 0 6 4" aria-hidden="true">
    <path d="M0 0H6L3 3.5z" fill={color} />
  </svg>
);

const Big = ({ children }: { children: React.ReactNode }) => (
  <svg width="24" height="24" viewBox="0 0 24 24" fill="none" aria-hidden="true">{children}</svg>
);

const Small = ({ children }: { children: React.ReactNode }) => (
  <svg width="16" height="16" viewBox="0 0 16 16" fill="none" aria-hidden="true">{children}</svg>
);

const Globe = ({ x, y }: { x: number; y: number }) => (
  <g transform={`translate(${x} ${y})`}>
    <circle r="6.2" fill="#fafafa" />
    <circle r="5" fill="#fff" stroke="#6c9bdc" strokeWidth="1.2" />
    <path d="M-4.5 -2L-2 -4.5H1L2 -2.500L0 -1L-1 1L-3 .5zM0 1L2 0L4.500 1L3 4L1 4.500z" fill="#6c9bdc" />
  </g>
);

const QR = ['1111111010101111111', '1000001011001000001', '1011101001001011101', '1011101010101011101', '1011101001101011101', '1000001010001000001', '1111111010101111111', '0000000011000000000', '1101011101101011011', '0110100110011010110', '1011011011010110101', '0000000010110100110', '1111111001011011010', '1000001011100101101', '1011101010111010011', '1011101001001111010', '1011101011010010111', '1000001000111011001', '1111111011010110110'];
const qrPath = QR.map((row, y) => [...row].map((c, x) => (c === '1' ? `M${x + 2} ${y + 2}h1v1h-1z` : '')).join('')).join('');

interface Tool {
  label: string;
  icon: React.ReactNode;
  caret?: boolean;
  active?: boolean;
  roomy?: boolean;
}

const pageTools: Tool[] = [
  {
    label: '分页',
    caret: true,
    icon: (
      <Big>
        <path d="M5.5 0V9.5H22.5V0M5.5 15V13.5H17L22.5 18.5V23.5H5.5V20" stroke="#666" />
        <path d="M17 13.5V18.5H22.5z" fill="#666" />
        <path d="M1 6L7 11.5L1 17z" fill="#6f9cf0" />
      </Big>
    ),
  },
  {
    label: '空白页',
    caret: true,
    icon: (
      <Big>
        <path d="M15 .5H4.5L2.5 2.5V21.5L4.5 23.5H19.5L21.5 21.5V7" stroke="#666" />
        <path d="M15 0L22 7H15z" fill="#7ba3ef" />
      </Big>
    ),
  },
];

const insertTools: Tool[] = [
  {
    label: '表格',
    caret: true,
    icon: (
      <Big>
        <path d="M.5 1.5H22.5V23H.5z" fill="#fff" />
        <path d="M6.5 7V23M11.5 7V23M17.5 7V23M1 12.5H22M1 17.5H22" stroke="#bdbdbd" />
        <rect x=".5" y=".5" width="22" height="22" rx="1.5" stroke="#666" />
        <path d="M.5 .5H22.5V6.5H.5z" fill="#79ae5a" stroke="#58913f" />
      </Big>
    ),
  },
  {
    label: '图片',
    caret: true,
    icon: (
      <Big>
        <path d="M0 2H24V22H0z" fill="#e1e9f1" />
        <circle cx="5.5" cy="7.5" r="2.7" fill="#f0924c" />
        <path d="M0 22V18L5 14Q7 12.5 9 15L11 17L14 12Q16 10 18 12L24 19V22z" fill="#7eb25f" />
      </Big>
    ),
  },
  {
    label: '在线图片',
    icon: (
      <Big>
        <path d="M0 2H21V20H0z" fill="#e1e9f1" />
        <circle cx="5" cy="7" r="2.2" fill="#f0924c" />
        <path d="M0 20V17L5 12L9 16L13 11L16 12V20z" fill="#7eb25f" />
        <Globe x={18} y={16} />
      </Big>
    ),
  },
  {
    label: '截屏',
    caret: true,
    icon: (
      <Big>
        <path d="M10 19H2.5L.5 17V3.5L2.5 1.5H17.5L19.5 3.5V9" stroke="#666" />
        <path d="M15.5 6V17M8 15.5H18" stroke="#6f9cf0" strokeWidth="2" />
        <circle cx="15.5" cy="20" r="2.5" stroke="#6c9bdc" strokeWidth="1.4" />
        <circle cx="21" cy="14.5" r="2.5" stroke="#6c9bdc" strokeWidth="1.4" />
      </Big>
    ),
  },
  {
    label: '形状',
    caret: true,
    active: true,
    icon: (
      <Big>
        <path d="M0 1.5H15V16H0z" fill="#808080" />
        <circle cx="16" cy="15.5" r="8.5" fill="#b1ccee" />
        <circle cx="16.5" cy="15.5" r="7.7" fill="#8fb0ea" />
      </Big>
    ),
  },
  {
    label: '图表',
    icon: (
      <Big>
        <path d="M1 2H7V22H1z" fill="#82b060" />
        <path d="M9 7H15V22H9z" fill="#808080" />
        <path d="M17 12H23V22H17z" fill="#ee925b" />
      </Big>
    ),
  },
  {
    label: '在线图表',
    icon: (
      <Big>
        <path d="M4 1H9V12H4z" fill="#82b060" />
        <path d="M11 6H16V21H11z" fill="#808080" />
        <path d="M18 11H23V21H18z" fill="#ee925b" />
        <Globe x={6} y={17} />
      </Big>
    ),
  },
  {
    label: '几何图',
    icon: (
      <Big>
        <circle cx="7.5" cy="15.5" r="7" fill="#b9b9b9" />
        <path d="M13.5 1.5L23.5 16.5H3.5z" fill="#7fa3ea" />
        <path d="M8.5 9Q13 10 14.4 16.5H3.5z" fill="#6d83ae" />
        <circle cx="7.5" cy="15.5" r="7" stroke="#606060" />
        <path d="M13.5 1.5L23.5 16.5H3.5z" stroke="#5577b5" />
      </Big>
    ),
  },
  {
    label: '地图',
    icon: (
      <Big>
        <path d="M0 3H24V22H0z" fill="#e6e6e6" />
        <path d="M0 3H15L8 13L0 8z" fill="#a7d184" />
        <path d="M0 9L12 22H0z" fill="#9ab5ea" />
        <path d="M0 7L15 22H11L0 11z" fill="#f8e48b" />
        <path d="M8 12L16 5L24 13V15L16 10L9 14z" fill="#fff" />
        <path d="M17 0A5 5 0 0 1 22 5C22 8.5 18.5 10 17 14C15.5 10 12 8.5 12 5A5 5 0 0 1 17 0z" fill="#ec6474" />
        <circle cx="17" cy="5" r="1.8" fill="#fff" />
      </Big>
    ),
  },
  { label: '二维码', icon: <Big><path d={qrPath} fill="#666" shapeRendering="crispEdges" /></Big> },
  {
    label: 'SmartArt',
    roomy: true,
    icon: (
      <Big>
        <path d="M0 2H14L20 8L16 14H0L4 8z" fill="#7fa7ea" />
        <path d="M8.5 9.5H23.5V21.5H8.5z" fill="#fff" stroke="#707070" />
        <path d="M11 12.5H12M13 12.5H21M11 15.5H12M13 15.5H21M11 18.5H12M13 18.5H21" stroke="#a0a0a0" />
      </Big>
    ),
  },
  {
    label: '关系图',
    icon: (
      <Big>
        <circle cx="12" cy="13.5" r="9" stroke="#777" />
        <g fill="#7ba3ef" stroke="#fafafa">
          <circle cx="12" cy="4.5" r="4" />
          <circle cx="4" cy="17.5" r="4" />
          <circle cx="20" cy="17.5" r="4" />
        </g>
      </Big>
    ),
  },
];

const textTools: Tool[] = [
  {
    label: '文本框',
    caret: true,
    icon: (
      <Big>
        <rect x=".5" y="1.5" width="22" height="21" rx="1.5" stroke="#707070" />
        <path d="M4.5 13L7.5 5H8.5L11.5 13M5.5 10.5H10.5" stroke="#6f9cf0" strokeWidth="2" />
        <path d="M14 5.5H19M14 8.5H19M14 11.5H19M4 15.5H19M4 18.5H19" stroke="#b2b2b2" />
      </Big>
    ),
  },
];

const quickTools: { label: string; icon: React.ReactNode }[] = [
  {
    label: '打开',
    icon: (
      <Small>
        <path d="M0 13V4L1 3H5L6.5 4.5H13V7H4z" fill="#f7a94f" />
        <path d="M3.5 7.5H16L12.5 14H0z" fill="#f58220" />
      </Small>
    ),
  },
  {
    label: '保存',
    icon: (
      <Small>
        <path d="M1 2H13L14.5 3.5V14H1z" fill="#fff" stroke="#7299e0" strokeWidth="2" />
        <path d="M4 2H12V6.5H4zM4 10H12V14H4z" fill="#fff" stroke="#7299e0" />
        <path d="M9 2H11V5H9z" fill="#7299e0" />
      </Small>
    ),
  },
  {
    label: '输出为 PDF',
    icon: (
      <Small>
        <path d="M3.5 3V1.5H12L15.5 5V14.5H3.5V9" stroke="#707070" />
        <path d="M12 1.5V5H15.5" stroke="#707070" />
        <path d="M0 4H3V2L6 5L3 8V6H0z" fill="#6ba84f" />
        <path d="M9 4.5C10.5 8 7 11.5 5.5 13C7 11 11 9.5 14 11C11 10.5 9.5 7.5 9 4.5z" stroke="#e2393f" strokeWidth="1.3" />
      </Small>
    ),
  },
  {
    label: '打印',
    icon: (
      <Small>
        <path d="M3 1H12V4H3zM0 5H15V12H13V10H2V12H0zM3 11H12V15H3z" fill="#8c8cc6" />
      </Small>
    ),
  },
  {
    label: '打印预览',
    icon: (
      <Small>
        <path d="M7 14.5H1.5V.5H10.5L13.5 4V8" stroke="#707070" />
        <path d="M10.5 .5V4H13.5" stroke="#707070" />
        <circle cx="9" cy="9" r="2.8" stroke="#5f9d48" strokeWidth="1.4" />
        <path d="M11 11L14 15" stroke="#5f9d48" strokeWidth="2" />
      </Small>
    ),
  },
  {
    label: '撤销',
    icon: (
      <Small>
        <path d="M2 3V9H8L6 7C9 4.5 11.5 7.5 7.5 14.5C15 9 15 1 8 2.5Q6 3 4 5z" fill="#a5a5a5" />
      </Small>
    ),
  },
  {
    label: '重做',
    icon: (
      <Small>
        <path d="M14 3V9H8L10 7C7 4.5 4.5 7.5 8.5 14.5C1 9 1 1 8 2.5Q10 3 12 5z" fill="#a5a5a5" />
      </Small>
    ),
  },
];

const menuTabs = ['开始', '插入', '页面布局', '引用', '审阅', '视图', '章节', '开发工具', '云服务'];
const upperTicks = [4, 3, 2, 1];
const lowerTicks = Array.from({ length: 27 }, (_, i) => i + 1);

function ToolButtons({ tools }: { tools: Tool[] }) {
  return (
    <>
      {tools.map((t) => (
        <RibbonButton key={t.label} $active={t.active} $roomy={t.roomy} aria-pressed={t.active}>
          {t.icon}
          <RibbonLabel>
            {t.label}
            {t.caret && <Caret />}
          </RibbonLabel>
        </RibbonButton>
      ))}
    </>
  );
}

function ShapesMenu() {
  return (
    <Menu aria-label="形状">
      <MenuHeader>
        <h2>推荐</h2>
        <MoreLink href="#more">
          更多
          <svg width="9" height="9" viewBox="0 0 9 9" fill="none" stroke="#2b68ec" aria-hidden="true">
            <path d="M.5 .5L4.5 4.5L.5 8.5M4.5 .5L8.5 4.5L4.5 8.5" />
          </svg>
        </MoreLink>
      </MenuHeader>
      <ScrollArea>
        <Recommended>
          {recommended.map((shape, i) => (
            <ShapeButton key={i} $solid aria-label={shape.name}>
              <ShapeIcon shape={shape} solid />
            </ShapeButton>
          ))}
        </Recommended>
        <Track $outer><Thumb /></Track>
      </ScrollArea>
      <MenuHeader>
        <h2>预设</h2>
      </MenuHeader>
      <ScrollArea $grow>
        <PresetList>
          {presets.map((group) => (
            <Category key={group.title}>
              <CategoryTitle>{group.title}</CategoryTitle>
              <ShapeGrid>
                {group.shapes.map((shape) => (
                  <ShapeButton key={shape.name} aria-label={shape.name}>
                    <ShapeIcon shape={shape} />
                  </ShapeButton>
                ))}
              </ShapeGrid>
            </Category>
          ))}
        </PresetList>
        <Track><Thumb /></Track>
      </ScrollArea>
      <MenuFooter>
        <MenuItem $hover>
          <svg width="17" height="16" viewBox="0 0 17 16" fill="none" aria-hidden="true">
            <path d="M6 2.5H12Q15.5 2.5 15.5 5T12 8H11M5 8H4Q.5 8.5 .8 11T4 13.5H10" stroke="#777" />
            <path d="M8 5L12 8L8 11L4 8z" stroke="#777" />
            <rect x="1" y="1" width="6" height="4" rx="1.5" fill="#777" />
            <rect x="10" y="12" width="6" height="4" rx="1.5" fill="#777" />
          </svg>
          新建流程图(F)
        </MenuItem>
        <MenuItem>
          <svg width="17" height="16" viewBox="0 0 17 16" fill="none" aria-hidden="true">
            <path d="M0 0H12V11H0z" fill="#808080" />
            <circle cx="11.5" cy="10.5" r="5.5" fill="#87aaea" />
            <path d="M1 15.5L5 6.5L9 15.5M2.5 12.5H7.5" stroke="#fff" strokeWidth="3.5" />
            <path d="M1 15.5L5 6.5L9 15.5M2.5 12.5H7.5" stroke="#666" strokeWidth="1.5" />
          </svg>
          新建绘图画布(N)
        </MenuItem>
        <Grip>
          <svg width="6" height="8" viewBox="0 0 6 8" aria-hidden="true">
            <path d="M4 1h2v2h-2zM4 5h2v2h-2zM0 5h2v2h-2z" fill="#c4c4c4" />
          </svg>
        </Grip>
      </MenuFooter>
    </Menu>
  );
}

export default function App() {
  return (
    <Page>
      <GlobalStyle />
      <TitleBar>
        <Brand>
          <BrandButton>
            <svg width="14" height="13" viewBox="0 0 14 13" fill="none" aria-hidden="true">
              <path d="M1 0V11L6.5 6L12 11V1.5H8" stroke="#fff" strokeWidth="2" />
            </svg>
            WPS 文字
          </BrandButton>
          <BrandMore aria-label="主菜单"><Caret color="#fff" /></BrandMore>
        </Brand>
        <OpenFile>
          <svg width="15" height="15" viewBox="0 0 15 15" fill="none" aria-hidden="true">
            <path d="M4 0H10V4H14V13H8V6H4z" fill="#808080" />
            <path d="M11 0L14 3H11z" fill="#808080" />
            <path d="M.5 7.5H6.5V13.5H.5z" fill="#fff" stroke="#4f90df" />
            <path d="M2 9V12L3.5 10.5L5 12V9" stroke="#4f90df" />
          </svg>
          提取卡顿的方
        </OpenFile>
      </TitleBar>
      <Tabs>
        {menuTabs.map((t) => (
          <Tab key={t} $active={t === '插入'}>{t}</Tab>
        ))}
      </Tabs>
      <Ribbon>
        <ToolButtons tools={pageTools} />
        <Divider />
        <ToolButtons tools={insertTools} />
        <Divider $tight />
        <ToolButtons tools={textTools} />
      </Ribbon>
      <QuickBar>
        <QuickTools>
          {quickTools.map((t) => (
            <QuickButton key={t.label} aria-label={t.label}>{t.icon}</QuickButton>
          ))}
        </QuickTools>
        <QuickMore aria-label="自定义快速访问工具栏"><Caret size={9} /></QuickMore>
        <DocTab>
          <svg width="16" height="12" viewBox="0 0 16 12" fill="none" aria-hidden="true">
            <path d="M0 1H7M2 1L5 10L8.5 1.5L11.5 10L14.5 1H8" stroke="#ea4347" strokeWidth="2" />
          </svg>
          我的WPS
          <CloseButton aria-label="关闭">
            <svg width="8" height="8" viewBox="0 0 8 8" stroke="#404040" aria-hidden="true">
              <path d="M.5 .5L7.5 7.5M7.5 .5L.5 7.5" />
            </svg>
          </CloseButton>
        </DocTab>
        <DocTab $active>
          <svg width="14" height="14" viewBox="0 0 14 14" fill="none" aria-hidden="true">
            <path d="M3.5 3V.5H13.5V13.5H3.5V11M9 3.5H12M9 6.5H12M9 9.5H12" stroke="#707070" />
            <path d="M0 3H8V11H0z" fill="#4c66a8" />
            <path d="M1.5 5V9L4 6.5L6.5 9V5" stroke="#fff" />
          </svg>
        </DocTab>
      </QuickBar>
      <Workspace>
        <TabStop aria-label="制表位">
          <svg width="7" height="7" viewBox="0 0 7 7" aria-hidden="true">
            <path d="M1 1H3V5H7V7H1z" fill="#858585" />
          </svg>
        </TabStop>
        <Ruler>
          <RulerPart>
            {upperTicks.map((n) => <Tick key={n}>{n}</Tick>)}
          </RulerPart>
          <RulerPart $body>
            {lowerTicks.map((n) => <Tick key={n}>{n}</Tick>)}
          </RulerPart>
        </Ruler>
      </Workspace>
      <ShapesMenu />
      <Pointer width="174" height="156" viewBox="0 0 174 156" aria-hidden="true">
        <path d="M1 .5L161 140L165 136L173 154L155 150L158 144L.5 1.5z" fill="#ff3b3b" />
      </Pointer>
    </Page>
  );
}
